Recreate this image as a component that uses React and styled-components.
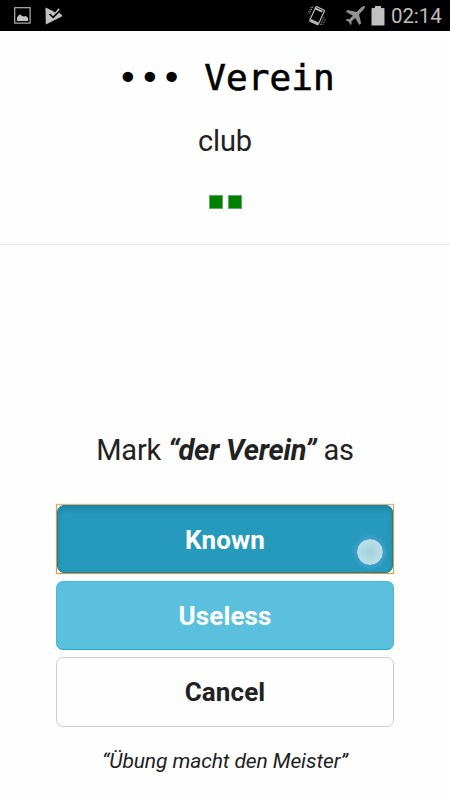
import React from "react";
import styled, { createGlobalStyle, css } from "styled-components";

const GlobalStyle = createGlobalStyle`
  * { box-sizing: border-box; }
  body { margin: 0; background: #fefefe; font-family: Roboto, "Open Sans", sans-serif; color: #222; }
`;

const Screen = styled.div`
  width: 450px;
  height: 800px;
  display: flex;
  flex-direction: column;
  overflow: hidden;
  background: #fefefe;
`;

const StatusBar = styled.header`
  flex: none;
  height: 31px;
  padding: 0 8px 0 14px;
  display: flex;
  align-items: center;
  justify-content: space-between;
  background: #000;
`;

const StatusGroup = styled.div`
  display: flex;
  align-items: center;
  height: 31px;
  svg { display: block; }
`;

const Clock = styled.span`
  margin-left: 6px;
  width: 51px;
  white-space: nowrap;
  color: #bebebe;
  font-size: 20.5px;
  letter-spacing: -0.1px;
  line-height: 31px;
  padding-top: 2px;
`;

const WordCard = styled.section`
  flex: none;
  height: 214px;
  display: flex;
  flex-direction: column;
  align-items: center;
  border-bottom: 1px solid #e6e6e6;
`;

const Word = styled.h1`
  margin: 25px 0 0;
  padding-left: 2px;
  height: 44px;
  font: 400 36px/44px "DejaVu Sans Mono", monospace;
  letter-spacing: 0.1px;
  color: #000;
  white-space: pre;
  span { -webkit-text-stroke: 0.6px #000; }
`;

const Translation = styled.p`
  margin: 22px 0 0;
  font-size: 29px;
  line-height: 38px;
  letter-spacing: -0.1px;
`;

const Progress = styled.div`
  margin-top: 35px;
  display: flex;
  gap: 5px;
`;

const Step = styled.span`
  width: 14px;
  height: 14px;
  background: #008000;
  border: 1px solid #63ad63;
`;

const Actions = styled.main`
  flex: 1;
  padding: 185px 56px 0;
  display: flex;
  flex-direction: column;
`;

const Prompt = styled.h2`
  margin: 0 0 34px;
  height: 40px;
  text-align: center;
  white-space: nowrap;
  font-weight: 400;
  font-size: 29px;
  line-height: 40px;
  letter-spacing: -0.2px;
  strong { font-style: italic; font-weight: 700; }
`;

const variants = {
  known: css`
    color: #fff;
    background: #269abc;
    border-color: #1b7f9d;
    box-shadow: inset 0 4px 6px -1px rgba(0, 0, 0, 0.14);
  `,
  useless: css`
    color: #fff;
    background: #5bc0de;
    border-color: #46b8da;
    border-bottom-color: #20a9cf;
  `,
  cancel: css`
    color: #222;
    background: #fefefe;
    border-color: #ccc;
  `,
};

const FocusRing = styled.div`
  margin: 0 0 7px;
  height: 70px;
  border: 1px solid #df9d3d;
  border-top-color: #d9b48a;
  box-shadow: 0 0 0 1px rgba(240, 180, 100, 0.15);
  display: flex;
`;

const Button = styled.button`
  position: relative;
  flex: none;
  width: 100%;
  height: ${(p) => p.$height}px;
  margin-bottom: ${(p) => p.$gap || 0}px;
  padding: 0;
  border: 1px solid;
  border-radius: 7px;
  font: 700 26px/36px Roboto, sans-serif;
  letter-spacing: 0.1px;
  ${(p) => variants[p.$variant]}
`;

const ButtonLabel = styled.span`
  display: block;
  padding-top: ${(p) => p.$drop || 0}px;
`;

const TouchDot = styled.span`
  position: absolute;
  right: 8px;
  bottom: 6px;
  width: 28px;
  height: 28px;
  border-radius: 50%;
  border: 1px solid #4f94cd;
  background: radial-gradient(circle, #a1d1df 0%, #bfe1e9 75%) padding-box;
  box-shadow: 0 0 4px 1px rgba(94, 180, 220, 0.6);
`;

const Motto = styled.p`
  margin: 20px 0 0;
  text-align: center;
  white-space: nowrap;
  font-style: italic;
  font-size: 21px;
  letter-spacing: -0.1px;
  line-height: 29px;
`;

const PictureIcon = () => (
  <svg width="17" height="17" viewBox="0 0 17 17">
    <rect x="0.7" y="0.7" width="15.4" height="15.4" fill="none" stroke="#b0b0b0" strokeWidth="1.2" />
    <path d="M3 14V10.5L5 8L6.5 7.5L8 9L10 9.5L12 9L14 11V14Z" fill="#c4c4c4" />
  </svg>
);

const CheckFlagIcon = () => (
  <svg width="18" height="18" viewBox="0 0 18 18">
    <path d="M.5 .5L8 4L10 5.5L13.5 1.2L14.8 2.6L13.5 5L17 8.2Q17.5 8.8 16.8 9.4L.8 17.6Z" fill="#c2c2c2" />
    <path d="M4.6 7L8.2 10.3L15.2 3.4" fill="none" stroke="#000" strokeWidth="1.6" />
    <path d="M7.5 3.2L9.8 5L12.5 1.2V0H7Z" fill="#000" />
  </svg>
);

const RotateIcon = () => (
  <svg width="20" height="22" viewBox="0 0 20 22">
    <g fill="none" stroke="#bcbcbc">
      <rect x="5.2" y="2.7" width="9.5" height="16" rx="1" transform="rotate(25 10 11)" strokeWidth="1.2" />
      <path d="M8 3.4L15.4 6.6M3.8 14.9L11 18.5" strokeWidth="2" />
      <path d="M6 1.5L2.2 9M4.5 1.8L1.3 7.6M17.3 12L13.2 20M18.5 14.5L15.5 20" strokeDasharray="1.5 1" strokeWidth="0.8" />
    </g>
  </svg>
);

const PlaneIcon = () => (
  <svg width="21" height="21" viewBox="0 0 21 21">
    <path
      d="M18.7 1Q20.2.5 20.1 2Q20 3.2 17.2 6L14 9.2L16.1 18.2L14.3 20L10.2 13L6.4 16.6L6.6 19L5.4 20L3.8 16.8L.7 15.2L1.8 14L4.3 14.2L7.9 10.7L1 6.7L2.6 5L11.5 7.1L15.1 3.4Q17.2 1.3 18.7 1Z"
      fill="#929292"
    />
  </svg>
);

const BatteryIcon = () => (
  <svg width="14" height="20" viewBox="0 0 14 20">
    <path d="M4 0H10V2H12.4Q13.5 2 13.5 3.1V19.5H.5V3.1Q.5 2 1.6 2H4Z" fill="#c0c0c0" />
  </svg>
);

const IconSlot = styled.span`
  margin-left: ${(p) => p.$left || 0}px;
`;

export default function App() {
  return (
    <>
      <GlobalStyle />
      <Screen>
        <StatusBar>
          <StatusGroup>
            <PictureIcon />
            <IconSlot $left={14}><CheckFlagIcon /></IconSlot>
          </StatusGroup>
          <StatusGroup>
            <RotateIcon />
            <IconSlot $left={18}><PlaneIcon /></IconSlot>
            <IconSlot $left={5}><BatteryIcon /></IconSlot>
            <Clock>02:14</Clock>
          </StatusGroup>
        </StatusBar>
        <WordCard>
          <Word>••• <span>Verein</span></Word>
          <Translation>club</Translation>
          <Progress>
            <Step />
            <Step />
          </Progress>
        </WordCard>
        <Actions>
          <Prompt>Mark <strong>“der Verein”</strong> as</Prompt>
          <FocusRing>
            <Button $variant="known" $height={68}>
              <ButtonLabel $drop={1}>Known</ButtonLabel>
              <TouchDot />
            </Button>
          </FocusRing>
          <Button $variant="useless" $height={69} $gap={7}>
            <ButtonLabel>Useless</ButtonLabel>
          </Button>
          <Button $variant="cancel" $height={70}>
            <ButtonLabel>Cancel</ButtonLabel>
          </Button>
          <Motto>“Übung macht den Meister”</Motto>
        </Actions>
      </Screen>
    </>
  );
}
